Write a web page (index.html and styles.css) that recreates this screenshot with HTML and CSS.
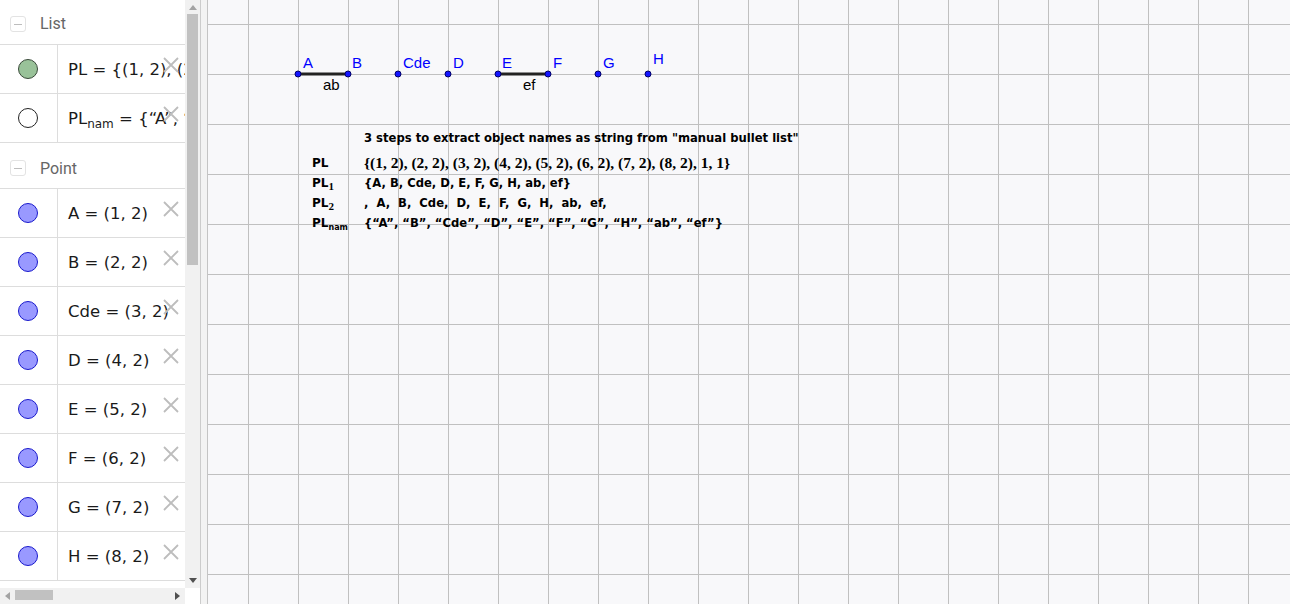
FILE: index.html
```html
<!DOCTYPE html>
<html>
<head>
<meta charset="utf-8">
<title>GeoGebra</title>
<link rel="stylesheet" href="styles.css">
</head>
<body>
<div class="app">
  <aside class="panel">
    <div class="list">
      <div class="group-head group-first"><span class="toggle"></span><span class="group-name">List</span></div>
      <div class="item">
        <div class="marker"><span class="dot dot-green"></span></div>
        <div class="value">PL = {(1, 2), (2, 2), (3, 2), (4, 2)}</div>
        <svg class="close" viewBox="0 0 16 16"><path d="M1 1L15 15M15 1L1 15"/></svg>
      </div>
      <div class="item">
        <div class="marker"><span class="dot dot-empty"></span></div>
        <div class="value">PL<sub>nam</sub> = {“A”, “B”, “Cde”}</div>
        <svg class="close" viewBox="0 0 16 16"><path d="M1 1L15 15M15 1L1 15"/></svg>
      </div>
      <div class="group-head"><span class="toggle"></span><span class="group-name">Point</span></div>
      <div class="item">
        <div class="marker"><span class="dot dot-blue"></span></div>
        <div class="value">A = (1, 2)</div>
        <svg class="close" viewBox="0 0 16 16"><path d="M1 1L15 15M15 1L1 15"/></svg>
      </div>
      <div class="item">
        <div class="marker"><span class="dot dot-blue"></span></div>
        <div class="value">B = (2, 2)</div>
        <svg class="close" viewBox="0 0 16 16"><path d="M1 1L15 15M15 1L1 15"/></svg>
      </div>
      <div class="item">
        <div class="marker"><span class="dot dot-blue"></span></div>
        <div class="value">Cde = (3, 2)</div>
        <svg class="close" viewBox="0 0 16 16"><path d="M1 1L15 15M15 1L1 15"/></svg>
      </div>
      <div class="item">
        <div class="marker"><span class="dot dot-blue"></span></div>
        <div class="value">D = (4, 2)</div>
        <svg class="close" viewBox="0 0 16 16"><path d="M1 1L15 15M15 1L1 15"/></svg>
      </div>
      <div class="item">
        <div class="marker"><span class="dot dot-blue"></span></div>
        <div class="value">E = (5, 2)</div>
        <svg class="close" viewBox="0 0 16 16"><path d="M1 1L15 15M15 1L1 15"/></svg>
      </div>
      <div class="item">
        <div class="marker"><span class="dot dot-blue"></span></div>
        <div class="value">F = (6, 2)</div>
        <svg class="close" viewBox="0 0 16 16"><path d="M1 1L15 15M15 1L1 15"/></svg>
      </div>
      <div class="item">
        <div class="marker"><span class="dot dot-blue"></span></div>
        <div class="value">G = (7, 2)</div>
        <svg class="close" viewBox="0 0 16 16"><path d="M1 1L15 15M15 1L1 15"/></svg>
      </div>
      <div class="item">
        <div class="marker"><span class="dot dot-blue"></span></div>
        <div class="value">H = (8, 2)</div>
        <svg class="close" viewBox="0 0 16 16"><path d="M1 1L15 15M15 1L1 15"/></svg>
      </div>
    </div>
    <div class="vscroll">
      <span class="arr arr-up"></span>
      <div class="vtrack"><span class="vthumb"></span></div>
      <span class="arr arr-down"></span>
    </div>
    <div class="hscroll">
      <span class="arr arr-left"></span>
      <div class="htrack"><span class="hthumb"></span></div>
      <span class="arr arr-right"></span>
    </div>
    <div class="corner"></div>
  </aside>
  <div class="splitter"></div>
  <main class="canvas">
    <svg class="drawing" width="1082" height="604" viewBox="0 0 1082 604">
      <line class="seg" x1="90" y1="74" x2="140" y2="74"/>
      <line class="seg" x1="290" y1="74" x2="340" y2="74"/>
      <circle class="pt" cx="90" cy="74" r="3"/>
      <circle class="pt" cx="140" cy="74" r="3"/>
      <circle class="pt" cx="190" cy="74" r="3"/>
      <circle class="pt" cx="240" cy="74" r="3"/>
      <circle class="pt" cx="290" cy="74" r="3"/>
      <circle class="pt" cx="340" cy="74" r="3"/>
      <circle class="pt" cx="390" cy="74" r="3"/>
      <circle class="pt" cx="440" cy="74" r="3"/>
      <text class="plabel" x="95" y="68">A</text>
      <text class="plabel" x="144" y="68">B</text>
      <text class="plabel" x="195" y="68">Cde</text>
      <text class="plabel" x="245" y="68">D</text>
      <text class="plabel" x="294" y="68">E</text>
      <text class="plabel" x="345" y="68">F</text>
      <text class="plabel" x="395" y="68">G</text>
      <text class="plabel" x="445" y="64">H</text>
      <text class="slabel" x="115" y="90">ab</text>
      <text class="slabel" x="315" y="90">ef</text>
    </svg>
    <div class="steps">
      <div class="steps-title">3 steps to extract object names as string from "manual bullet list"</div>
      <div class="steps-grid">
        <div class="lbl">PL</div>
        <div class="val val-num">{(1, 2), (2, 2), (3, 2), (4, 2), (5, 2), (6, 2), (7, 2), (8, 2), 1, 1}</div>
        <div class="lbl">PL<sub class="snum">1</sub></div>
        <div class="val">{A, B, Cde, D, E, F, G, H, ab, ef}</div>
        <div class="lbl">PL<sub class="snum">2</sub></div>
        <div class="val val-wide">, A, B, Cde, D, E, F, G, H, ab, ef,</div>
        <div class="lbl">PL<sub class="sname">nam</sub></div>
        <div class="val">{“A”, “B”, “Cde”, “D”, “E”, “F”, “G”, “H”, “ab”, “ef”}</div>
      </div>
    </div>
  </main>
</div>
</body>
</html>
```

FILE: styles.css
```css
* { box-sizing: border-box; }
html, body { margin: 0; padding: 0; background: #ffffff; }
body { width: 1292px; height: 606px; overflow: hidden; font-family: "DejaVu Sans", sans-serif; }

.app { display: flex; width: 1290px; height: 604px; }

/* ---------- algebra panel ---------- */
.panel {
  width: 201px;
  flex: none;
  display: grid;
  grid-template-columns: 185px 15px;
  grid-template-rows: 588px 16px;
  border-right: 1px solid #cccccc;
  background: #ffffff;
}
.list { overflow: hidden; position: relative; }

.group-head {
  height: 46px;
  display: flex;
  align-items: center;
  border-bottom: 1px solid #dddddd;
  padding-left: 10px;
  padding-top: 5px;
}
.group-first { height: 45px; padding-top: 3px; }
.toggle {
  width: 16px; height: 16px;
  border: 1px solid #e3e3e3;
  border-radius: 3px;
  position: relative;
  flex: none;
}
.toggle::after {
  content: "";
  position: absolute;
  left: 3px; right: 3px; top: 7px;
  height: 1px;
  background: #bdbdbd;
}
.group-name {
  margin-left: 14px;
  font-family: Roboto, "Liberation Sans", sans-serif;
  font-size: 16px;
  color: #666666;
}

.item {
  height: 49px;
  display: flex;
  border-bottom: 1px solid #dddddd;
  position: relative;
}
.marker {
  width: 58px;
  flex: none;
  border-right: 1px solid #dddddd;
  display: flex;
  align-items: center;
  justify-content: center;
  padding-right: 2px;
}
.dot {
  width: 20px; height: 20px;
  border-radius: 50%;
  border: 1px solid #333333;
}
.dot-blue { background: #9999ff; border-color: #1a1acc; }
.dot-green { background: #99c299; border-color: #3a4a3a; }
.dot-empty { background: #ffffff; border-color: #222222; }

.value {
  padding-left: 10px;
  padding-top: 1px;
  display: flex;
  align-items: center;
  white-space: pre;
  overflow: hidden;
  font-size: 16.5px;
  color: #1a1a1a;
  flex: 1;
}
.value sub { font-size: 12px; position: relative; top: 5px; line-height: 1; }

.close {
  position: absolute;
  left: 163px; top: 12px;
  width: 16px; height: 16px;
  fill: none;
  stroke: #bdbdbd;
  stroke-width: 1.8;
}

.vscroll {
  background: #f1f1f1;
  display: flex;
  flex-direction: column;
  align-items: center;
}
.vtrack { flex: 1; width: 100%; padding: 1px 2px; }
.vthumb { display: block; width: 11px; height: 251px; background: #c1c1c1; }
.arr { width: 0; height: 0; flex: none; border-style: solid; border-color: transparent; }
.arr-up { margin: 5px 0 3px; border-width: 0 4px 5px 4px; border-bottom-color: #a3a3a3; }
.arr-down { margin: 3px 0 5px; border-width: 5px 4px 0 4px; border-top-color: #505050; }

.hscroll {
  background: #f1f1f1;
  display: flex;
  align-items: center;
}
.htrack { flex: 1; height: 100%; padding: 2px 2px; }
.hthumb { display: block; width: 38px; height: 10px; background: #c1c1c1; }
.arr-left { margin: 0 3px 0 5px; border-width: 4px 5px 4px 0; border-right-color: #a3a3a3; }
.arr-right { margin: 0 5px 0 3px; border-width: 4px 0 4px 5px; border-left-color: #505050; }
.corner { background: #ffffff; }

.splitter {
  width: 7px;
  flex: none;
  background: #f3f3f3;
  border-right: 1px solid #c4c4c4;
}

/* ---------- graphics view ---------- */
.canvas {
  flex: 1;
  position: relative;
  overflow: hidden;
  background-color: #f8f8fa;
  background-image:
    linear-gradient(to right, #c0c0c0 1px, transparent 1px),
    linear-gradient(to bottom, #c0c0c0 1px, transparent 1px);
  background-size: 50px 50px;
  background-position: 40px 0, 0 24px;
}
.drawing { position: absolute; left: 0; top: 0; }
.seg { stroke: #222222; stroke-width: 3; }
.pt { fill: #1414ff; stroke: #000066; stroke-width: 1; }
.plabel { font-family: "Liberation Sans", sans-serif; font-size: 15px; fill: #0000ff; }
.slabel { font-family: "Liberation Sans", sans-serif; font-size: 15px; fill: #000000; }

.steps {
  position: absolute;
  left: 104px;
  top: 129px;
  font-family: "DejaVu Sans", sans-serif;
  font-weight: bold;
  font-size: 11.6px;
  color: #000000;
}
.steps-title { margin-left: 52px; height: 18px; line-height: 18px; }
.steps-grid {
  margin-top: 6px;
  display: grid;
  grid-template-columns: 52px auto;
  grid-auto-rows: 20px;
  align-items: center;
}
.lbl { white-space: nowrap; font-size: 12px; }
.lbl sub { line-height: 0; vertical-align: -3px; }
.snum { font-family: "Liberation Serif", serif; font-size: 11px; }
.sname { font-size: 8px; }
.val { white-space: nowrap; }
.val-num { font-family: "Liberation Serif", serif; font-size: 15.5px; }
.val-wide { word-spacing: 4px; }
```
